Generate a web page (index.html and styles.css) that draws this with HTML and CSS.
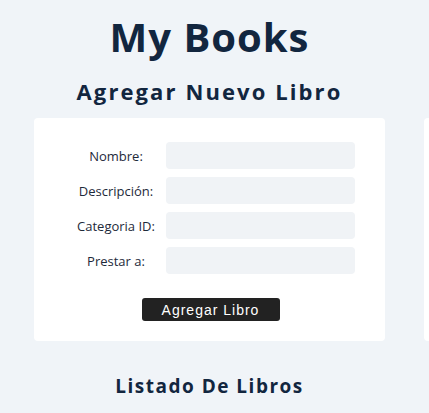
FILE: index.html
```html
<!DOCTYPE html>
<html lang="es">
<head>
<meta charset="utf-8">
<title>My Books</title>
<link rel="stylesheet" href="styles.css">
</head>
<body>
<div class="page">
  <h1 class="title">My Books</h1>
  <h2 class="section-title">Agregar Nuevo Libro</h2>
  <div class="cards">
    <form class="card form-card">
      <div class="field">
        <label class="label">Nombre:</label>
        <input class="input" type="text">
      </div>
      <div class="field">
        <label class="label">Descripción:</label>
        <input class="input" type="text">
      </div>
      <div class="field">
        <label class="label">Categoria ID:</label>
        <input class="input" type="text">
      </div>
      <div class="field">
        <label class="label">Prestar a:</label>
        <input class="input" type="text">
      </div>
      <div class="actions">
        <button class="button" type="button">Agregar Libro</button>
      </div>
    </form>
    <div class="card side-card"></div>
  </div>
  <h2 class="list-title">Listado De Libros</h2>
</div>
</body>
</html>
```
FILE: styles.css
```css
html, body {
  margin: 0;
  padding: 0;
  background: #f0f4f8;
  overflow: hidden;
}
body {
  font-family: "Open Sans", "Noto Sans", sans-serif;
  color: #12263f;
}
.page {
  width: 351px;
  padding-left: 34px;
  padding-top: 12px;
}
.title {
  margin: 0;
  text-align: center;
  font-size: 40px;
  line-height: 50px;
  font-weight: 700;
  letter-spacing: 1px;
}
.section-title {
  margin: 14px 0 0;
  text-align: center;
  font-size: 22px;
  line-height: 30px;
  font-weight: 700;
  letter-spacing: 2.1px;
}
.cards {
  display: flex;
  gap: 39px;
  margin-top: 12px;
  width: 395px;
  overflow: hidden;
}
.card {
  flex-shrink: 0;
  background: #ffffff;
  border-radius: 4px;
  height: 223px;
  box-sizing: border-box;
}
.form-card {
  width: 351px;
  padding: 24px 30px 0 32px;
  display: flex;
  flex-direction: column;
  gap: 8px;
}
.side-card {
  width: 351px;
}
.field {
  display: flex;
  align-items: center;
}
.label {
  width: 100px;
  text-align: center;
  font-size: 13px;
  color: #1e2a3a;
}
.input {
  width: 189px;
  height: 27px;
  box-sizing: border-box;
  border: none;
  border-radius: 4px;
  background: #f0f3f6;
  margin: 0;
  padding: 0 6px;
}
.actions {
  display: flex;
  justify-content: center;
  margin-top: 16px;
}
.button {
  width: 138px;
  height: 23px;
  background: #222222;
  color: #ffffff;
  border: none;
  border-radius: 3px;
  font-family: "Liberation Sans", Arial, sans-serif;
  font-size: 14px;
  letter-spacing: 1px;
  padding: 0;
}
.list-title {
  margin: 32px 0 0;
  text-align: center;
  font-size: 19px;
  line-height: 26px;
  font-weight: 700;
  letter-spacing: 1.5px;
}
```
